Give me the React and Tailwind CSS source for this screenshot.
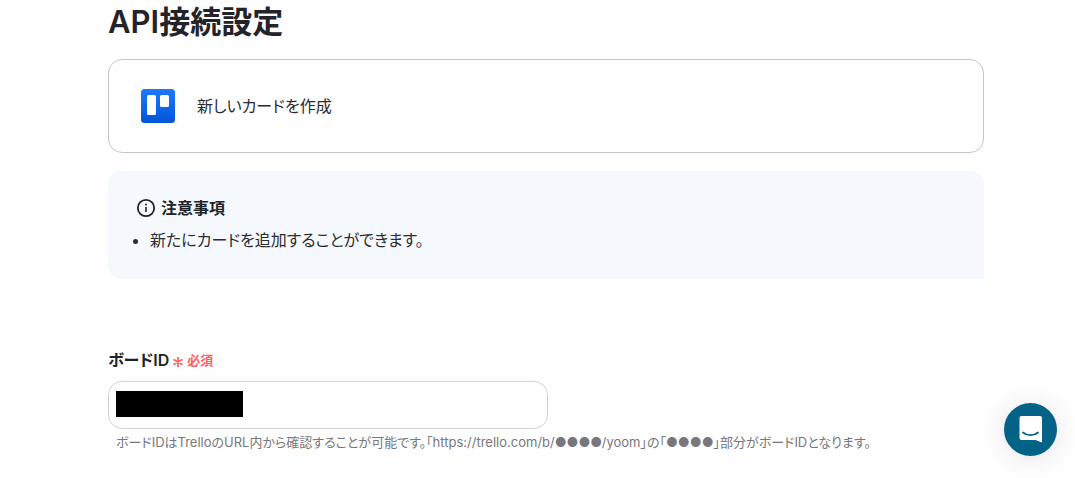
import { useState } from 'react';

function TrelloLogo() {
  return (
    <svg viewBox="0 0 34 34" className="size-[34px] shrink-0" aria-hidden="true">
      <defs>
        <linearGradient id="trello-bg" x1="0" y1="0" x2="0" y2="1">
          <stop offset="0" stopColor="#1d7afc" />
          <stop offset="1" stopColor="#0055d8" />
        </linearGradient>
      </defs>
      <rect width="34" height="34" rx="3.5" fill="url(#trello-bg)" />
      <rect x="6" y="6" width="9" height="20" rx="1.5" fill="#fff" />
      <rect x="19" y="6" width="9" height="12" rx="1.5" fill="#fff" />
    </svg>
  );
}

function InfoIcon() {
  return (
    <svg viewBox="0 0 20 20" className="size-5 shrink-0" fill="none" stroke="#1f2226" aria-hidden="true">
      <circle cx="10" cy="10" r="8.2" strokeWidth="1.8" />
      <path d="M10 9v5" strokeWidth="1.6" />
      <circle cx="10" cy="6.5" r="1" fill="#1f2226" stroke="none" />
    </svg>
  );
}

function RequiredMark() {
  return (
    <svg viewBox="0 0 12 12" className="mt-1 size-3" fill="none" stroke="#ff5f61" strokeWidth="1.7" strokeLinecap="round" aria-hidden="true">
      <path d="M6 1.6v8.8M2 3.8l8 4.4M2 8.2l8-4.4" />
    </svg>
  );
}

function ChatButton() {
  return (
    <button
      type="button"
      aria-label="チャットを開く"
      className="fixed right-[18px] bottom-[22px] flex size-[53px] items-center justify-center rounded-full bg-[#036286] shadow-[0_2px_24px_rgba(60,20,80,0.12)]"
    >
      <svg viewBox="0 0 24 28" className="h-7 w-6" aria-hidden="true">
        <path d="M2.5 0H21a2 2 0 0 1 2 2v24.500L16.500 24h-14a2 2 0 0 1-2-2V2a2 2 0 0 1 2-2Z" fill="#fff" />
        <path d="M4 16.5c4.500 3.600 10.500 3.600 15 0" fill="none" stroke="#036286" strokeWidth="1.8" strokeLinecap="round" />
      </svg>
    </button>
  );
}

export default function App() {
  const [boardId, setBoardId] = useState('');

  return (
    <div className="min-h-screen bg-[#fefefe] pr-[91px] pl-[108px] font-['Inter','Noto_Sans_CJK_JP',sans-serif] text-[#2b2c30]">
      <main lang="ja">
        <h1 className="pt-1 text-[31px] leading-9 font-semibold text-[#242428]">API接続設定</h1>

        <section className="mt-[19px] flex h-[94px] items-center gap-[22px] rounded-[14px] border border-[#c6c6c9] px-8">
          <TrelloLogo />
          <p className="text-[16px] leading-[22px] [font-feature-settings:'palt']">新しいカードを作成</p>
        </section>

        <section className="mt-[18px] rounded-[14px] rounded-br-none bg-[#f5f9fd] px-7 pt-[26px] pb-7">
          <h2 className="flex items-center gap-[5px] text-[16px] leading-[22px] font-semibold text-[#1f2226]">
            <InfoIcon />
            注意事項
          </h2>
          <ul className="mt-[10px] list-disc pl-[14px] text-[16px] leading-[22px] [font-feature-settings:'palt']">
            <li>新たにカードを追加することができます。</li>
          </ul>
        </section>

        <section className="mt-[70px]">
          <label htmlFor="board-id" className="flex items-center gap-[3px] leading-[22px]">
            <span className="text-[16px] font-semibold text-[#1f2226] [font-feature-settings:'palt']">ボードID</span>
            <span className="flex items-center gap-[3px] text-[13px] font-semibold text-[#ff5f61]">
              <RequiredMark />
              必須
            </span>
          </label>
          <div className="relative mt-[10px] w-full max-w-[440px]">
            <input
              id="board-id"
              type="text"
              value={boardId}
              onChange={(e) => setBoardId(e.target.value)}
              aria-describedby="board-id-help"
              className="block h-12 w-full rounded-[14px] border border-[#d3d3d7] bg-white px-2 text-[16px]"
            />
            <span className="pointer-events-none absolute top-[10px] left-2 h-[26px] w-[127px] bg-black" />
          </div>
          <p id="board-id-help" className="mt-[3px] pl-2 text-[13px] leading-5 text-[#77777d] [font-feature-settings:'palt']">
            ボードIDはTrelloのURL内から確認することが可能です。「https://trello.com/b/●●●●/yoom」の「●●●●」部分がボードIDとなります。
          </p>
        </section>
      </main>

      <ChatButton />
    </div>
  );
}
